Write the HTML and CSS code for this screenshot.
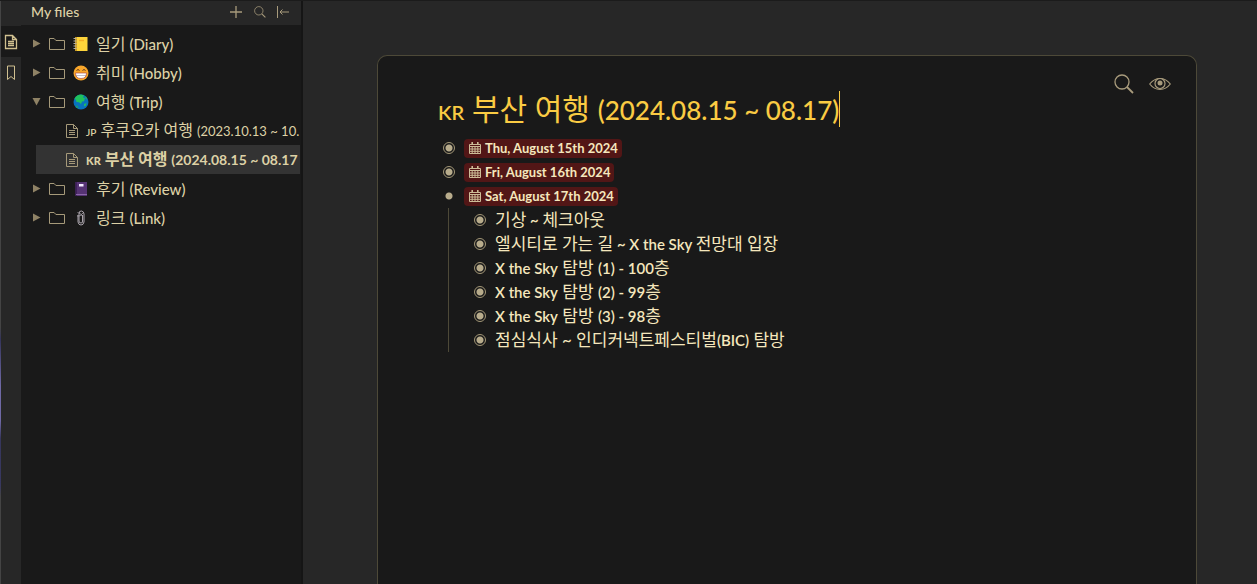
FILE: index.html
```html
<!DOCTYPE html>
<html lang="ko">
<head>
    <meta charset="UTF-8">
    <meta name="viewport" content="width=device-width, initial-scale=1.0">
    <title>부산 여행</title>
    <link rel="stylesheet" href="styles.css">
</head>
<body>
    <!-- Shared icons -->
    <svg class="sprite" aria-hidden="true">
        <symbol id="i-folder" viewBox="0 0 18 16"><path d="M1.5 13.5v-11h4.6l1.8 2h8.6v9z" fill="none" stroke="currentColor"/></symbol>
        <symbol id="i-file" viewBox="0 0 14 16"><path d="M1.5 1.5h7l4 4v9h-11zM8.5 1.5v4h4M4 7.5h6M4 9.5h6M4 11.5h6" fill="none" stroke="currentColor"/></symbol>
        <symbol id="i-search" viewBox="0 0 20 20"><circle cx="8" cy="8" r="7" fill="none" stroke="currentColor" stroke-width="1.3"/><path d="M13 13l6 6" stroke="currentColor" stroke-width="1.8"/></symbol>
        <symbol id="i-calendar" viewBox="0 0 12 12"><path d="M0.5 2.5h11v9h-11zM0.5 4.5h11M0.5 7h11M0.5 9.3h11M3.2 4.5v7M6 4.5v7M8.8 4.5v7" fill="none" stroke="currentColor"/><path d="M3.2 0v3M8.8 0v3" stroke="currentColor" stroke-width="1.6"/></symbol>
    </svg>

    <div class="app">
        <nav class="rail">
            <button class="rail-btn active" aria-label="Files">
                <svg width="14" height="16" viewBox="0 0 14 16"><path d="M1.5 1.5h7l4 4v9h-11zM8.5 1.5v4h4M4 7.5h6M4 9.5h6M4 11.5h6" fill="none" stroke="currentColor" stroke-width="1.3"/></svg>
            </button>
            <button class="rail-btn" aria-label="Bookmarks">
                <svg width="10" height="16" viewBox="0 0 10 16"><path d="M1.5 1h7v13.5l-3.5-3-3.5 3z" fill="none" stroke="currentColor"/></svg>
            </button>
        </nav>

        <aside class="sidebar">
            <header class="sidebar-header">
                <h2>My files</h2>
                <button aria-label="Add"><svg width="14" height="14"><path d="M7 1v12M1 7h12" stroke="currentColor" stroke-width="1.3"/></svg></button>
                <button aria-label="Search"><svg width="12" height="12"><use href="#i-search"/></svg></button>
                <button aria-label="Collapse"><svg width="12" height="12"><path d="M.5 0v12M3 6h9M5.5 3.5L3 6l2.5 2.5" fill="none" stroke="currentColor"/></svg></button>
            </header>
            <ul class="tree">
                <li class="row">
                    <svg class="arrow" width="9" height="9"><path d="M1 .5l7.5 4-7.5 4z" fill="currentColor"/></svg>
                    <svg class="folder" width="18" height="16"><use href="#i-folder"/></svg>
                    <svg class="emoji" width="16" height="16" viewBox="0 0 16 16"><path d="M2 1h12.5v14H2z" fill="#fdd43b"/><path d="M2 1h2v14H2z" fill="#c99b25"/><path d="M.5 2.5h3M.5 5h3M.5 7.5h3M.5 10h3M.5 12.5h3" stroke="#b5b0a5"/><path d="M6 4.5h5" stroke="#f4ad24" stroke-width="1.4"/></svg>
                    <span>일기 <span class="en">(Diary)</span></span>
                </li>
                <li class="row">
                    <svg class="arrow" width="9" height="9"><path d="M1 .5l7.5 4-7.5 4z" fill="currentColor"/></svg>
                    <svg class="folder" width="18" height="16"><use href="#i-folder"/></svg>
                    <svg class="emoji" width="16" height="16" viewBox="0 0 16 16"><circle cx="8" cy="8" r="7.5" fill="#f9a72b"/><path d="M3.5 5.5q1.5-2 3 0M9.5 5.5q1.5-2 3 0" fill="none" stroke="#5b3420"/><path d="M2.5 8h11q0 5.5-5.5 5.5T2.5 8z" fill="#fff"/><path d="M2.8 10.5h10.4" stroke="#a8a0b0" stroke-width=".7"/><path d="M2.5 8h11q0 5.5-5.5 5.5T2.5 8z" fill="none" stroke="#a33a3f" stroke-width=".6"/></svg>
                    <span>취미 <span class="en">(Hobby)</span></span>
                </li>
                <li class="row">
                    <svg class="arrow" width="9" height="9"><path d="M.5 1h8l-4 7.5z" fill="currentColor"/></svg>
                    <svg class="folder" width="18" height="16"><use href="#i-folder"/></svg>
                    <svg class="emoji" width="16" height="16" viewBox="0 0 16 16"><circle cx="8" cy="8" r="7.5" fill="#0872be"/><path d="M1.5 4.5Q4 .5 8 .5l3 .8-1 2 2 1-1 3-2 .2-1 2.5-2-1.7-2.5-.3L3 6z" fill="#20c25c"/><path d="M11 10l2.5-1-.5 2.5-2 1zM11.5 2l2.5 2-.5 2z" fill="#20b960"/><path d="M2.5 13L4 11l2 3.5z" fill="#1c9c6a"/></svg>
                    <span>여행 <span class="en">(Trip)</span></span>
                </li>
                <li class="row child">
                    <svg class="file" width="14" height="16"><use href="#i-file"/></svg>
                    <span><small>JP</small> 후쿠오카 여행 <span class="dates">(2023.10.13 ~ 10.</span></span>
                </li>
                <li class="row child selected">
                    <svg class="file" width="14" height="16"><use href="#i-file"/></svg>
                    <span><small>KR</small> 부산 여행 <span class="dates">(2024.08.15 ~ 08.17</span></span>
                </li>
                <li class="row">
                    <svg class="arrow" width="9" height="9"><path d="M1 .5l7.5 4-7.5 4z" fill="currentColor"/></svg>
                    <svg class="folder" width="18" height="16"><use href="#i-folder"/></svg>
                    <svg class="emoji" width="16" height="16" viewBox="0 0 16 16"><path d="M2.5 1H14v14H2.5z" fill="#563374"/><path d="M2.5 1H4v14H2.5z" fill="#40205c"/><path d="M3 13.5h11" stroke="#8b66aa"/><path d="M6 3h4.5v2.5H6z" fill="#f3eaff"/></svg>
                    <span>후기 <span class="en">(Review)</span></span>
                </li>
                <li class="row">
                    <svg class="arrow" width="9" height="9"><path d="M1 .5l7.5 4-7.5 4z" fill="currentColor"/></svg>
                    <svg class="folder" width="18" height="16"><use href="#i-folder"/></svg>
                    <svg class="emoji" width="16" height="16" viewBox="0 0 16 16"><g fill="none" stroke="#aaa4ac"><path d="M5 5v7q.5 3 3 3t3-3V4q0-2.5-2.5-3T6 4v7q0 2 2 2t1.5-2V5"/><path d="M4.5 2.5q3 0 5 4M4 6q3 1 6-3" stroke-width=".8"/></g></svg>
                    <span>링크 <span class="en">(Link)</span></span>
                </li>
            </ul>
        </aside>

        <main class="main">
            <article class="document">
                <div class="tools">
                    <button aria-label="Find"><svg width="20" height="20"><use href="#i-search"/></svg></button>
                    <button aria-label="View"><svg width="22" height="14" viewBox="0 0 22 14"><g fill="none" stroke="currentColor" stroke-width="1.2"><path d="M.7 7Q5 1.5 11 1.5T21.3 7Q17 12.5 11 12.5T.7 7z"/><circle cx="11" cy="6.5" r="5"/></g><circle cx="11" cy="6" r="2.5" fill="currentColor"/></svg></button>
                </div>
                <h1><small>KR</small> 부산 여행 <span class="dates">(2024.08.15 ~ 08.17)</span><span class="caret"></span></h1>
                <ul class="outline">
                    <li><div class="line"><span class="bullet"></span><time datetime="2024-08-15"><svg width="12" height="12"><use href="#i-calendar"/></svg>Thu, August 15th 2024</time></div></li>
                    <li><div class="line"><span class="bullet"></span><time datetime="2024-08-16"><svg width="12" height="12"><use href="#i-calendar"/></svg>Fri, August 16th 2024</time></div></li>
                    <li>
                        <div class="line"><span class="bullet open"></span><time datetime="2024-08-17"><svg width="12" height="12"><use href="#i-calendar"/></svg>Sat, August 17th 2024</time></div>
                        <ul>
                            <li class="line"><span class="bullet"></span><span>기상<span class="en"> ~ </span>체크아웃</span></li>
                            <li class="line"><span class="bullet"></span><span>엘시티로 가는 길<span class="en"> ~ X the Sky </span>전망대 입장</span></li>
                            <li class="line"><span class="bullet"></span><span><span class="en">X the Sky</span> 탐방 <span class="en">(1) - 100</span>층</span></li>
                            <li class="line"><span class="bullet"></span><span><span class="en">X the Sky</span> 탐방 <span class="en">(2) - 99</span>층</span></li>
                            <li class="line"><span class="bullet"></span><span><span class="en">X the Sky</span> 탐방 <span class="en">(3) - 98</span>층</span></li>
                            <li class="line"><span class="bullet"></span><span>점심식사 ~ 인디커넥트페스티벌<span class="en">(BIC)</span> 탐방</span></li>
                        </ul>
                    </li>
                </ul>
            </article>
        </main>
    </div>
</body>
</html>
```
FILE: styles.css
```css
* {
    box-sizing: border-box;
}

body {
    margin: 0;
    background: #272727;
    color: #ddd1a6;
    font-family: Lato, "Noto Sans CJK KR", sans-serif;
    font-size: 16px;
}

ul {
    list-style: none;
    margin: 0;
    padding: 0;
}

button {
    display: flex;
    align-items: center;
    justify-content: center;
    padding: 0;
    border: 0;
    background: none;
    color: #a89b7c;
    cursor: pointer;
}

svg {
    flex: none;
}

.sprite {
    display: none;
}

.app {
    display: flex;
    height: 100vh;
    overflow: hidden;
    border-top: 1px solid #1b1b1b;
}

/* Latin text beside Hangul */
.en {
    font-size: 15px;
    font-weight: 600;
}

/* Left rail */
.rail {
    flex: 0 0 21px;
    padding-top: 25px;
    background: linear-gradient(#444 56%, #34345a 58%, #6f69a5 66%, #6f69a5 72%, #36365c 75%, #383860 83%, #444 85%) left / 1px 100% no-repeat #272727;
}

.rail-btn {
    width: 20px;
    height: 31px;
    margin-left: 1px;
    color: #d0c090;
}

.rail-btn.active {
    background: #191919;
}

/* File tree */
.sidebar {
    flex: 0 0 282px;
    min-width: 0;
    background: #191919;
    border-right: 2px solid #151515;
}

.sidebar-header {
    display: flex;
    align-items: center;
    gap: 11px;
    height: 24px;
    padding: 0 12px 2px 10px;
    background: #272727;
}

.sidebar-header h2 {
    flex: 1;
    margin: 0;
    font-size: 14px;
    font-weight: 500;
    line-height: 20px;
}

.tree {
    margin-right: 1px;
    padding: 4px 0 0 15px;
    overflow: hidden;
}

.row {
    display: flex;
    align-items: center;
    height: 29px;
    line-height: 24px;
    white-space: nowrap;
}

.arrow {
    margin: 0 7px 0 -4px;
    color: #8f8265;
}

.folder,
.file {
    color: #a69a7a;
}

.emoji {
    margin: 0 7px;
}

.child {
    padding-left: 29px;
}

.file {
    margin-right: 7px;
}

.tree small {
    font-size: 10px;
    font-weight: 600;
}

.tree .en {
    font-weight: 500;
}

.tree .dates {
    font-size: 13px;
}

.row.selected {
    background: #333;
    font-weight: 700;
}

.row.selected small {
    font-size: 11px;
    font-weight: 900;
}

.row.selected .dates {
    font-size: 14px;
}

/* Document */
.main {
    flex: 1;
    display: flex;
    padding: 54px 60px 0 74px;
}

.document {
    position: relative;
    flex: 1;
    padding: 28px 60px 0;
    background: #191919;
    border: 1px solid #4d4938;
    border-bottom: 0;
    border-radius: 10px 10px 0 0;
}

.tools {
    position: absolute;
    top: 18px;
    right: 25px;
    display: flex;
    gap: 15px;
}

h1 {
    display: flex;
    align-items: baseline;
    height: 52px;
    margin: 0;
    color: #facb43;
    font-size: 30px;
    font-weight: 400;
    line-height: 48px;
    white-space: pre;
}

h1 small {
    font-size: 20px;
    font-weight: 600;
}

h1 .dates {
    font-size: 26px;
    font-weight: 500;
}

.caret {
    align-self: flex-start;
    height: 36px;
    margin-top: 7px;
    border-left: 1px solid #facb43;
}

.outline {
    padding-left: 5px;
    color: #f5e7bd;
    font-size: 17px;
}

.line {
    display: flex;
    align-items: center;
    height: 24px;
    line-height: 24px;
}

.bullet {
    flex: none;
    width: 12px;
    height: 12px;
    margin-right: 9px;
    border: 1px solid #a39777;
    border-radius: 50%;
    background: radial-gradient(circle, #b8ac8c 3px, transparent 4px);
}

.bullet.open {
    border-color: transparent;
}

time {
    display: flex;
    align-items: center;
    gap: 4px;
    height: 19px;
    padding: 0 4px 0 5px;
    border-radius: 4px;
    background: #521616;
    font-size: 13px;
    font-weight: 700;
}

time svg {
    color: #cdbd98;
}

.outline ul {
    margin-left: 5px;
    padding-left: 25px;
    border-left: 1px solid #4d4938;
}
```
